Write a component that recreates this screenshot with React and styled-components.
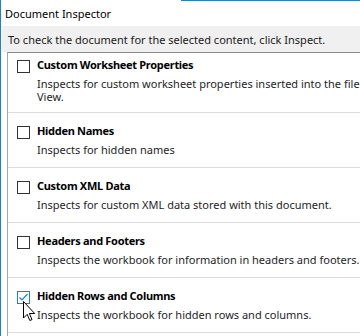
import React from "react";
import styled, { createGlobalStyle } from "styled-components";

const GlobalStyle = createGlobalStyle`
  html, body {
    margin: 0;
    padding: 0;
    background: #ffffff;
  }
  body {
    font-family: "Noto Sans", "Open Sans", "Liberation Sans", sans-serif;
  }
`;

// Dialog frame
const Window = styled.div`
  position: relative;
  width: 360px;
  height: 336px;
  overflow: hidden;
  box-sizing: border-box;
  border-left: 1px solid #1c80d6;
  background: #ffffff;
`;

const TitleBar = styled.div`
  position: relative;
  height: 26px;
  display: flex;
  align-items: center;
  padding-left: 4px;
  font-size: 11px;
  color: #000000;

  &::before {
    content: "";
    position: absolute;
    top: 0;
    left: 180px;
    right: 0;
    height: 1px;
    background: #1c80d6;
  }
`;

const HintBar = styled.div`
  height: 26px;
  display: flex;
  align-items: center;
  margin-left: 1px;
  padding-left: 6px;
  background: #f0f0f0;
  font-size: 11px;
  color: #1a1a1a;
`;

const ListBox = styled.div`
  margin-left: 6px;
  border-left: 1px solid #a6a6a6;
  border-top: 1px solid #8a8a8a;
  background: #ffffff;
  height: 300px;
  overflow: hidden;
`;

const Item = styled.div`
  display: flex;
  align-items: flex-start;
  padding: ${(p) => (p.first ? "4px 0 9px 9px" : "10px 0 11px 9px")};
  border-bottom: 1px solid #dcdcdc;
`;

const Box = styled.span`
  flex: none;
  position: relative;
  width: 13px;
  height: 13px;
  box-sizing: border-box;
  margin-top: 3px;
  margin-right: 7px;
  border: 1px solid ${(p) => (p.checked ? "#1e7fd8" : "#333333")};
  background: #ffffff;

  svg {
    position: absolute;
    left: 0;
    top: 0;
  }
`;

const Text = styled.div`
  display: flex;
  flex-direction: column;
  min-width: 0;
`;

const Title = styled.div`
  font-size: 11px;
  line-height: 16px;
  font-weight: 700;
  letter-spacing: -0.3px;
  color: #000000;
  white-space: nowrap;
`;

const Desc = styled.div`
  margin-top: 4px;
  font-size: 11px;
  line-height: 13px;
  color: #1e1e28;
  white-space: pre;
`;

const Cursor = styled.svg`
  position: absolute;
  left: 22px;
  top: 301px;
  pointer-events: none;
`;

const items = [
  {
    title: "Custom Worksheet Properties",
    desc: "Inspects for custom worksheet properties inserted into the file\nView.",
  },
  { title: "Hidden Names", desc: "Inspects for hidden names" },
  {
    title: "Custom XML Data",
    desc: "Inspects for custom XML data stored with this document.",
  },
  {
    title: "Headers and Footers",
    desc: "Inspects the workbook for information in headers and footers.",
  },
  {
    title: "Hidden Rows and Columns",
    desc: "Inspects the workbook for hidden rows and columns.",
    checked: true,
  },
];

const CheckBox = ({ checked }) => (
  <Box checked={checked}>
    {checked && (
      <svg width="11" height="11" viewBox="0 0 11 11">
        <path d="M1.5 5.5 L4 8 L9.5 2" fill="none" stroke="#1e7fd8" strokeWidth="1.2" />
      </svg>
    )}
  </Box>
);

const App = () => (
  <>
    <GlobalStyle />
    <Window>
      <TitleBar>Document Inspector</TitleBar>
      <HintBar>To check the document for the selected content, click Inspect.</HintBar>
      <ListBox>
        {items.map((it, i) => (
          <Item key={it.title} first={i === 0}>
            <CheckBox checked={it.checked} />
            <Text>
              <Title>{it.title}</Title>
              <Desc>{it.desc}</Desc>
            </Text>
          </Item>
        ))}
      </ListBox>
      {/* mouse pointer resting over the last checkbox */}
      <Cursor width="14" height="21" viewBox="0 0 14 21">
        <path
          d="M0.5 0.5 L0.5 17 L4.2 13.3 L6.8 19.5 L9 18.6 L6.4 12.5 L11.7 12.5 Z"
          fill="#ffffff"
          stroke="#000000"
          strokeWidth="1"
          strokeLinejoin="miter"
        />
      </Cursor>
    </Window>
  </>
);

export default App;
